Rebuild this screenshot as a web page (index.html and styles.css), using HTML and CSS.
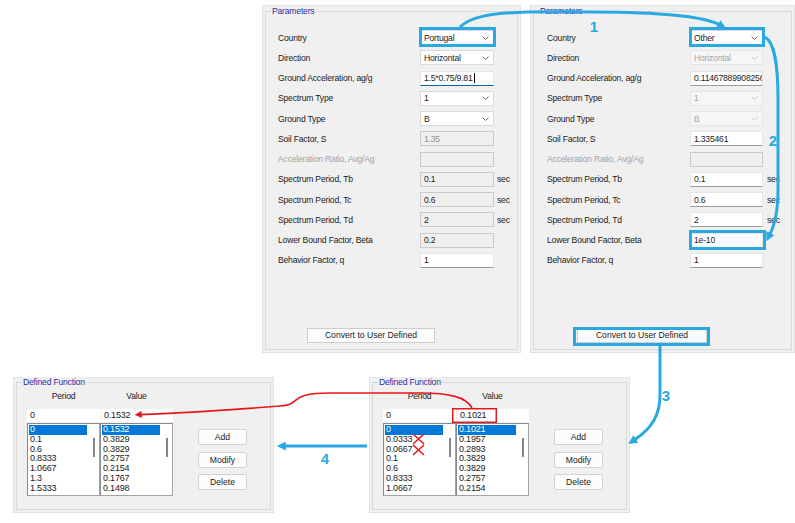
FILE: index.html
```html
<!DOCTYPE html>
<html>
<head>
<meta charset="utf-8">
<link rel="stylesheet" href="styles.css">
</head>
<body>
<div class="canvas">
  <div class="top-row">
    <section class="panel panel--params">
      <div class="group">
        <div class="legend">Parameters</div>
        <div class="form">
          <span class="lbl">Country</span>
          <div class="fld combo"><span>Portugal</span><svg class="chev" width="7" height="4" viewBox="0 0 7 4"><polyline points="0.5,0.5 3.5,3.5 6.5,0.5"/></svg></div><span></span>
          <span class="lbl">Direction</span>
          <div class="fld combo"><span>Horizontal</span><svg class="chev" width="7" height="4" viewBox="0 0 7 4"><polyline points="0.5,0.5 3.5,3.5 6.5,0.5"/></svg></div><span></span>
          <span class="lbl">Ground Acceleration, ag/g</span>
          <div class="fld fld--text fld--focus"><span>1.5*0.75/9.81</span><span class="caret"></span></div><span></span>
          <span class="lbl">Spectrum Type</span>
          <div class="fld combo"><span>1</span><svg class="chev" width="7" height="4" viewBox="0 0 7 4"><polyline points="0.5,0.5 3.5,3.5 6.5,0.5"/></svg></div><span></span>
          <span class="lbl">Ground Type</span>
          <div class="fld combo"><span>B</span><svg class="chev" width="7" height="4" viewBox="0 0 7 4"><polyline points="0.5,0.5 3.5,3.5 6.5,0.5"/></svg></div><span></span>
          <span class="lbl">Soil Factor, S</span>
          <div class="fld fld--ro fld--dis"><span>1.35</span></div><span></span>
          <span class="lbl lbl--dis">Acceleration Ratio, Avg/Ag</span>
          <div class="fld fld--ro"></div><span></span>
          <span class="lbl">Spectrum Period, Tb</span>
          <div class="fld fld--ro"><span>0.1</span></div><span class="unit">sec</span>
          <span class="lbl">Spectrum Period, Tc</span>
          <div class="fld fld--ro"><span>0.6</span></div><span class="unit">sec</span>
          <span class="lbl">Spectrum Period, Td</span>
          <div class="fld fld--ro"><span>2</span></div><span class="unit">sec</span>
          <span class="lbl">Lower Bound Factor, Beta</span>
          <div class="fld fld--ro"><span>0.2</span></div><span></span>
          <span class="lbl">Behavior Factor, q</span>
          <div class="fld fld--text"><span>1</span></div><span></span>
        </div>
        <button class="btn btn--convert">Convert to User Defined</button>
      </div>
    </section>

    <section class="panel panel--params panel--wide">
      <div class="group">
        <div class="legend">Parameters</div>
        <div class="form">
          <span class="lbl">Country</span>
          <div class="fld combo"><span>Other</span><svg class="chev" width="7" height="4" viewBox="0 0 7 4"><polyline points="0.5,0.5 3.5,3.5 6.5,0.5"/></svg></div><span></span>
          <span class="lbl">Direction</span>
          <div class="fld combo combo--dis"><span>Horizontal</span><svg class="chev" width="7" height="4" viewBox="0 0 7 4"><polyline points="0.5,0.5 3.5,3.5 6.5,0.5"/></svg></div><span></span>
          <span class="lbl">Ground Acceleration, ag/g</span>
          <div class="fld fld--text"><span>0.11467889908256</span></div><span></span>
          <span class="lbl">Spectrum Type</span>
          <div class="fld combo combo--dis"><span>1</span><svg class="chev" width="7" height="4" viewBox="0 0 7 4"><polyline points="0.5,0.5 3.5,3.5 6.5,0.5"/></svg></div><span></span>
          <span class="lbl">Ground Type</span>
          <div class="fld combo combo--dis"><span>B</span><svg class="chev" width="7" height="4" viewBox="0 0 7 4"><polyline points="0.5,0.5 3.5,3.5 6.5,0.5"/></svg></div><span></span>
          <span class="lbl">Soil Factor, S</span>
          <div class="fld fld--text"><span>1.335461</span></div><span></span>
          <span class="lbl lbl--dis">Acceleration Ratio, Avg/Ag</span>
          <div class="fld fld--ro"></div><span></span>
          <span class="lbl">Spectrum Period, Tb</span>
          <div class="fld fld--text"><span>0.1</span></div><span class="unit">sec</span>
          <span class="lbl">Spectrum Period, Tc</span>
          <div class="fld fld--text"><span>0.6</span></div><span class="unit">sec</span>
          <span class="lbl">Spectrum Period, Td</span>
          <div class="fld fld--text"><span>2</span></div><span class="unit">sec</span>
          <span class="lbl">Lower Bound Factor, Beta</span>
          <div class="fld fld--text"><span>1e-10</span></div><span></span>
          <span class="lbl">Behavior Factor, q</span>
          <div class="fld fld--text"><span>1</span></div><span></span>
        </div>
        <button class="btn btn--convert">Convert to User Defined</button>
      </div>
    </section>
  </div>

  <div class="bottom-row">
    <section class="panel panel--df">
      <div class="group">
        <div class="legend">Defined Function</div>
        <div class="df-body">
          <div class="df-main">
            <div class="df-head"><span>Period</span><span>Value</span></div>
            <div class="df-inputs"><div class="df-in">0</div><div class="df-in">0.1532</div></div>
            <div class="df-lists">
              <div class="lst">
                <div class="lst-items">
                  <div class="it it--sel">0</div><div class="it">0.1</div><div class="it">0.6</div><div class="it">0.8333</div><div class="it">1.0667</div><div class="it">1.3</div><div class="it">1.5333</div>
                </div>
                <div class="lst-scroll"><div class="thumb"></div></div>
              </div>
              <div class="lst">
                <div class="lst-items">
                  <div class="it it--sel">0.1532</div><div class="it">0.3829</div><div class="it">0.3829</div><div class="it">0.2757</div><div class="it">0.2154</div><div class="it">0.1767</div><div class="it">0.1498</div>
                </div>
                <div class="lst-scroll"><div class="thumb"></div></div>
              </div>
            </div>
          </div>
          <div class="df-buttons">
            <button class="btn btn--df">Add</button>
            <button class="btn btn--df">Modify</button>
            <button class="btn btn--df">Delete</button>
          </div>
        </div>
      </div>
    </section>

    <section class="panel panel--df">
      <div class="group">
        <div class="legend">Defined Function</div>
        <div class="df-body">
          <div class="df-main">
            <div class="df-head"><span>Period</span><span>Value</span></div>
            <div class="df-inputs"><div class="df-in">0</div><div class="df-in">0.1021</div></div>
            <div class="df-lists">
              <div class="lst">
                <div class="lst-items">
                  <div class="it it--sel">0</div><div class="it">0.0333</div><div class="it">0.0667</div><div class="it">0.1</div><div class="it">0.6</div><div class="it">0.8333</div><div class="it">1.0667</div>
                </div>
                <div class="lst-scroll"><div class="thumb"></div></div>
              </div>
              <div class="lst">
                <div class="lst-items">
                  <div class="it it--sel">0.1021</div><div class="it">0.1957</div><div class="it">0.2893</div><div class="it">0.3829</div><div class="it">0.3829</div><div class="it">0.2757</div><div class="it">0.2154</div>
                </div>
                <div class="lst-scroll"><div class="thumb"></div></div>
              </div>
            </div>
          </div>
          <div class="df-buttons">
            <button class="btn btn--df">Add</button>
            <button class="btn btn--df">Modify</button>
            <button class="btn btn--df">Delete</button>
          </div>
        </div>
      </div>
    </section>
  </div>

  <svg class="annotations" width="795" height="523" viewBox="0 0 795 523">
    <defs>
      <marker id="headBlue" viewBox="0 0 10 10" refX="1" refY="5" markerWidth="10" markerHeight="9" markerUnits="userSpaceOnUse" orient="auto">
        <path d="M0 0 L10 5 L0 10 Z" fill="#29a9e1"/>
      </marker>
      <marker id="headRed" viewBox="0 0 10 10" refX="1" refY="5" markerWidth="8" markerHeight="7" markerUnits="userSpaceOnUse" orient="auto">
        <path d="M0 0 L10 5 L0 10 Z" fill="#e8161b"/>
      </marker>
    </defs>
    <g class="hl">
      <rect x="420.5" y="28.5" width="74" height="17"/>
      <rect x="690.5" y="28.5" width="73" height="17"/>
      <rect x="690.5" y="231.5" width="74" height="17"/>
      <rect x="574.5" y="328.5" width="134" height="16"/>
    </g>
    <g class="arr">
      <path d="M460 27 C470 17 490 13 528 12 C640 11 700 14 719 24.5" marker-end="url(#headBlue)"/>
      <path d="M765 37 C775 43 778 65 778 100 L778 190 C778 212 775 224 770 234" marker-end="url(#headBlue)"/>
      <path d="M660 346 L660 395 C660 415 652 428 635 439.5" marker-end="url(#headBlue)"/>
      <path d="M367 446 L285 446" marker-end="url(#headBlue)"/>
    </g>
    <g class="red">
      <rect x="452.75" y="408.75" width="43.5" height="13.5"/>
      <path d="M472 408 C466 397 450 393 420 393 L330 393 C305 393 300 397 296 400 C292 403 291 405 280 406 C230 410 180 413 141 414.6" marker-end="url(#headRed)"/>
      <path d="M413 434 L424 444 M424 434 L413 444 M413 445 L424 455 M424 445 L413 455"/>
    </g>
    <text class="num" x="594" y="32">1</text>
    <text class="num" x="773" y="146">2</text>
    <text class="num" x="666" y="401">3</text>
    <text class="num" x="325" y="464">4</text>
  </svg>
</div>
</body>
</html>
```

FILE: styles.css
```css
* { box-sizing: border-box; margin: 0; padding: 0; }
html, body { background: #ffffff; }
body {
  width: 795px;
  height: 523px;
  overflow: hidden;
  font-family: "Liberation Sans", Arial, sans-serif;
  font-size: 8.6px;
  letter-spacing: -0.2px;
  color: #1b1b1b;
}
.canvas { position: relative; width: 795px; height: 523px; }

/* rows of panels */
.top-row { display: flex; gap: 9px; padding: 5px 0 0 262px; }
.bottom-row { display: flex; gap: 95px; padding: 24px 0 0 13px; }

.panel { background: #f0f0f0; border: 1px solid #e2e2e2; }
.panel--params { width: 259px; height: 348px; }
.panel--wide { width: 265px; }
.panel--df { width: 261px; height: 136px; }

.group {
  border: 1px solid #d9d9d9;
  margin: 5px 2px 2px;
  height: calc(100% - 7px);
}
.panel--df .group { margin-top: 4px; height: calc(100% - 6px); }

.legend {
  width: max-content;
  height: 11px;
  line-height: 11px;
  margin: -6px 0 0 5px;
  padding: 0 1px;
  background: #f0f0f0;
  color: #2c2ca6;
}

/* parameter form */
.form {
  display: grid;
  grid-template-columns: 142px 74px auto;
  grid-auto-rows: 20.25px;
  align-items: center;
  margin: 10.4px 0 0 12px;
}
.panel--wide .form { grid-template-columns: 143px 74px auto; margin-left: 13px; }
.lbl { white-space: nowrap; }
.lbl--dis { color: #a3a3a3; }
.unit { padding-left: 3px; }

.fld {
  height: 15px;
  width: 74px;
  display: flex;
  align-items: center;
  padding: 0 3px;
  background: #ffffff;
  border: 1px solid #e1e1e1;
  white-space: nowrap;
  overflow: hidden;
}
.panel--wide .fld { width: 73px; }
.fld--text { border-color: #e6e6e6; border-bottom-color: #9a9a9a; }
.fld--focus { border-bottom-color: #0a64b8; }
.fld--ro { background: #efefef; border-color: #cacaca; }
.fld--dis { color: #8e8e8e; }
.caret { display: inline-block; width: 1px; height: 10px; background: #000; margin-left: 1px; }

.combo { justify-content: space-between; border-color: #dadada; }
.combo--dis { background: #f6f6f6; border-color: #e6e6e6; color: #a5a5a5; }
.chev { flex: none; margin-right: 1px; }
.chev polyline { fill: none; stroke: #707070; stroke-width: 1; }
.combo--dis .chev polyline { stroke: #c6c6c6; }

.btn {
  display: block;
  font: inherit;
  color: #1b1b1b;
  background: #fcfcfc;
  border: 1px solid #cdcdcd;
  text-align: center;
  line-height: 13px;
}
.btn--convert { width: 128px; height: 15px; margin: 57.6px 0 0 41px; }
.panel--wide .btn--convert { width: 130px; margin-left: 43px; }

/* defined function */
.df-body { display: flex; align-items: flex-start; margin: 3px 0 0 10px; }
.df-main { width: 146px; }
.df-head { display: grid; grid-template-columns: 73px 73px; height: 11px; line-height: 11px; text-align: center; }
.df-inputs { display: grid; grid-template-columns: 73px 72px; gap: 1px; margin-top: 7px; }
.df-in { height: 13px; line-height: 13px; padding-left: 3px; background: #ffffff; font-size: 9px; }
.df-lists { display: flex; margin-top: 1px; }
.lst {
  width: 73px;
  height: 73px;
  display: flex;
  padding: 1px;
  background: #ffffff;
  border: 1px solid #a3a3a3;
  border-top-color: #8a8a8a;
  border-left-color: #8a8a8a;
  font-size: 9px;
  line-height: 9.75px;
  overflow: hidden;
}
.lst-items { width: 58px; }
.it { height: 9.75px; padding-left: 1px; white-space: nowrap; }
.it--sel { background: #0078d7; color: #ffffff; }
.lst-scroll { flex: 1; }
.thumb { width: 2px; height: 19px; margin: 13px 0 0 6px; background: #868686; }

.df-buttons { display: flex; flex-direction: column; gap: 6.5px; margin: 38px 0 0 25px; }
.btn--df { width: 49px; height: 16px; line-height: 14px; border-color: #d2d2d2; border-radius: 2px; }

/* annotation overlay */
.annotations { position: absolute; left: 0; top: 0; pointer-events: none; }
.hl rect { fill: none; stroke: #29a9e1; stroke-width: 3; }
.arr path { fill: none; stroke: #29a9e1; stroke-width: 3; }
.red rect { fill: none; stroke: #e8161b; stroke-width: 1.5; }
.red path { fill: none; stroke: #e8161b; stroke-width: 1.6; }
.num { font: bold 15px "Liberation Sans", Arial, sans-serif; letter-spacing: 0; fill: #29a9e1; text-anchor: middle; }
```
